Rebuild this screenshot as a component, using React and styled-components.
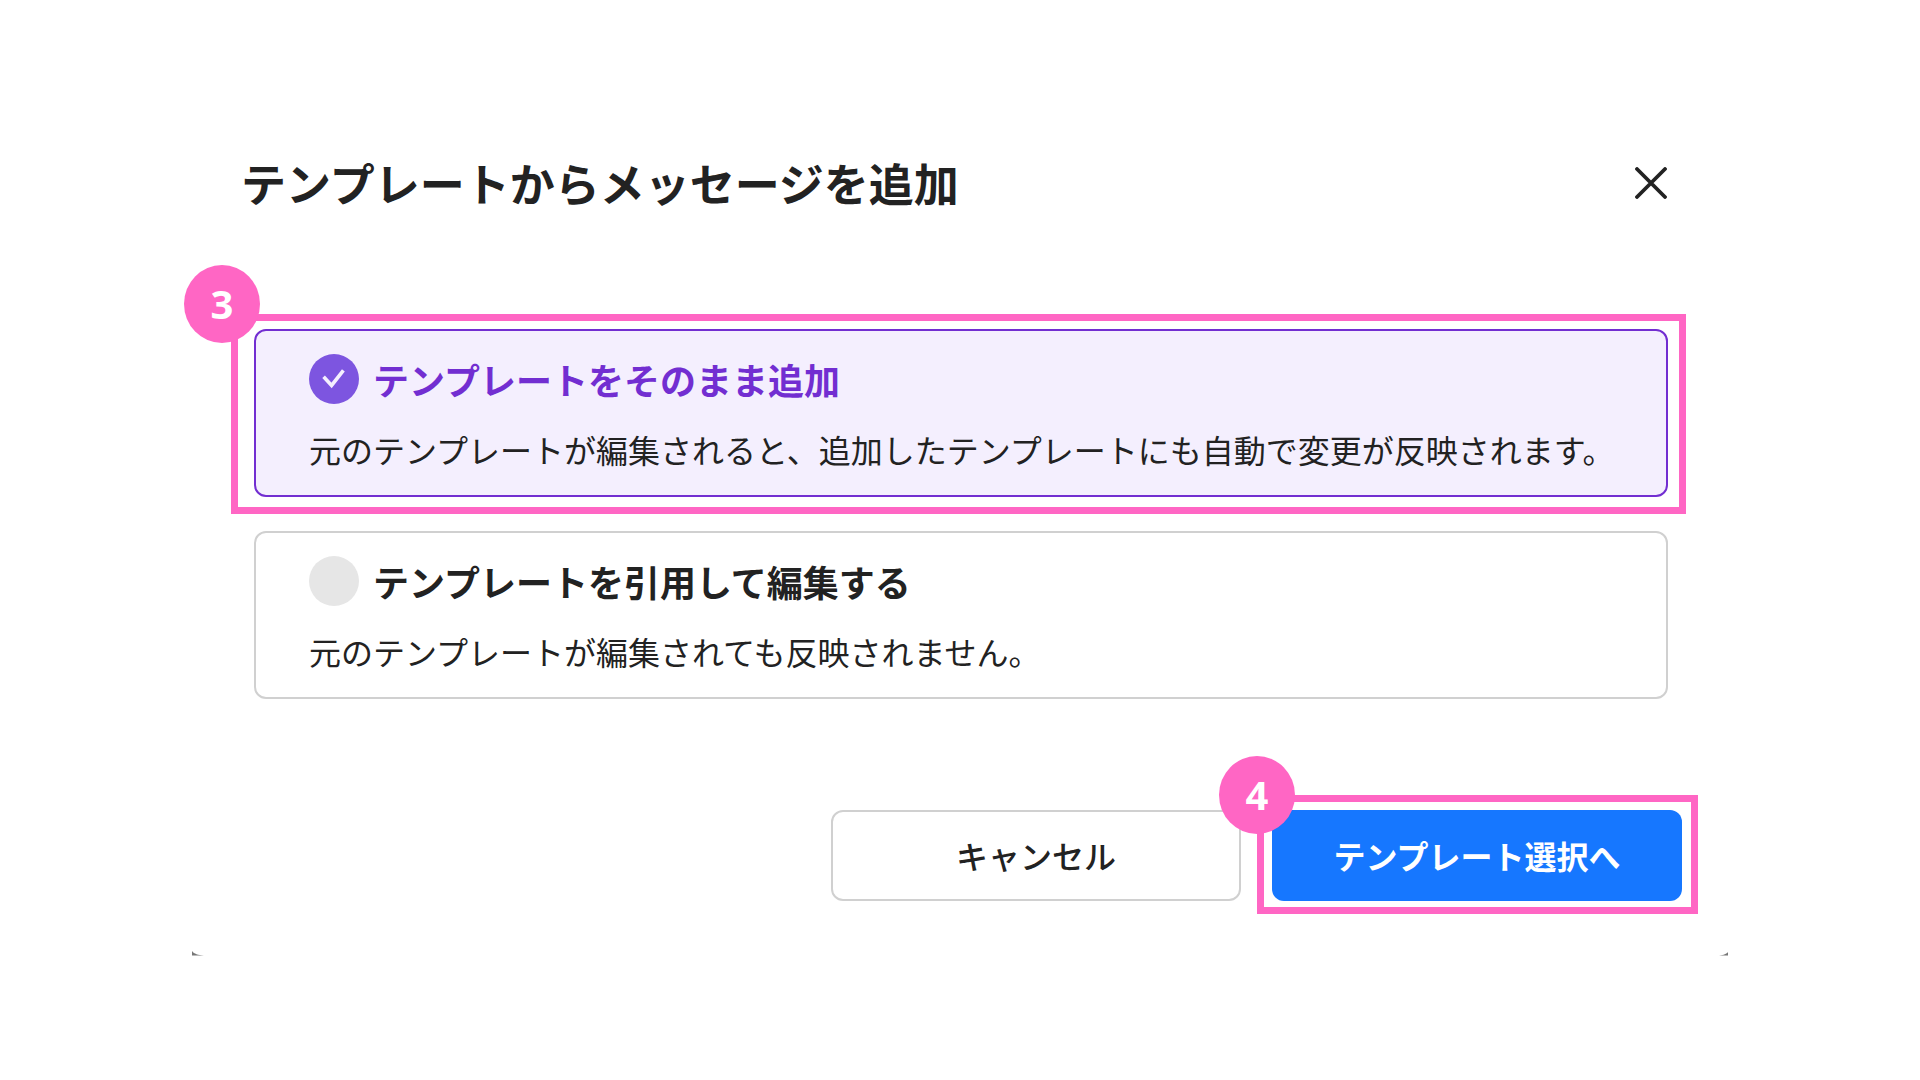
import { useState } from "react";
import styled, { createGlobalStyle } from "styled-components";

const options = [
  {
    id: "link",
    title: "テンプレートをそのまま追加",
    description:
      "元のテンプレートが編集されると、追加したテンプレートにも自動で変更が反映されます。",
    step: 3,
  },
  {
    id: "copy",
    title: "テンプレートを引用して編集する",
    description: "元のテンプレートが編集されても反映されません。",
  },
];

const App = () => {
  const [selected, setSelected] = useState("link");

  return (
    <>
      <GlobalStyle />
      <Page>
        <Dialog role="dialog" aria-labelledby="dialog-title">
          <Header>
            <Title id="dialog-title">テンプレートからメッセージを追加</Title>
            <CloseButton type="button" aria-label="閉じる">
              <svg width="32" height="32" viewBox="0 0 32 32" fill="none">
                <path
                  d="M2 2L30 30M30 2L2 30"
                  stroke="currentColor"
                  strokeWidth="3.8"
                  strokeLinecap="round"
                />
              </svg>
            </CloseButton>
          </Header>

          <OptionList>
            {options.map((option) => (
              <OptionCard key={option.id} $active={selected === option.id}>
                <OptionHead>
                  <RadioBox>
                    <Radio
                      type="radio"
                      name="addMode"
                      value={option.id}
                      checked={selected === option.id}
                      onChange={() => setSelected(option.id)}
                    />
                    {selected === option.id && (
                      <CheckMark viewBox="0 0 50 50" fill="none">
                        <path
                          d="M14.6 22.8L22.6 31.4L34.4 16.4"
                          stroke="#f4effe"
                          strokeWidth="3.6"
                        />
                      </CheckMark>
                    )}
                  </RadioBox>
                  <OptionTitle $active={selected === option.id}>
                    {option.title}
                  </OptionTitle>
                </OptionHead>
                <Description>{option.description}</Description>
                {option.step && (
                  <CardMarker>
                    <StepBadge $top={-56} $left={-54}>
                      {option.step}
                    </StepBadge>
                  </CardMarker>
                )}
              </OptionCard>
            ))}
          </OptionList>

          <Footer>
            <Button type="button">キャンセル</Button>
            <ButtonSlot>
              <Button type="button" $primary>
                テンプレート選択へ
              </Button>
              <ButtonMarker>
                <StepBadge $top={-46} $left={-45}>
                  4
                </StepBadge>
              </ButtonMarker>
            </ButtonSlot>
          </Footer>

          <Corners>
            <svg width="12" height="5" viewBox="0 0 12 5">
              <path d="M0 0C2 3 6 4 12 4.6H0Z" fill="#777" />
            </svg>
            <svg width="9" height="4" viewBox="0 0 9 4">
              <path d="M9 0C7.5 2 5 3 0 3.6H9Z" fill="#777" />
            </svg>
          </Corners>
        </Dialog>
      </Page>
    </>
  );
};

export default App;

const GlobalStyle = createGlobalStyle`
  * {
    box-sizing: border-box;
  }

  body {
    margin: 0;
    background: #fff;
    color: #222;
    font-family: "Noto Sans CJK JP", "Noto Sans", sans-serif;
  }

  button {
    font-family: inherit;
    cursor: pointer;
  }
`;

const Page = styled.main`
  min-height: 100vh;
  padding: 149px 10% 0;
`;

const Dialog = styled.section`
  display: flex;
  flex-direction: column;
`;

const Header = styled.header`
  display: flex;
  align-items: center;
  justify-content: space-between;
  padding: 0 50px 0 49px;
  margin-bottom: 112px;
`;

const Title = styled.h1`
  margin: 0;
  font-size: 45px;
  font-weight: 700;
  line-height: 68px;
`;

const CloseButton = styled.button`
  display: flex;
  align-items: center;
  justify-content: center;
  width: 54px;
  height: 54px;
  padding: 0;
  border: none;
  background: none;
  color: #222;
`;

const OptionList = styled.div`
  display: flex;
  flex-direction: column;
  gap: 34px;
  padding: 0 60px 0 62px;
  margin-bottom: 111px;
`;

const OptionCard = styled.label`
  position: relative;
  display: block;
  padding: 23px 40px 24px 53px;
  border: 2px solid ${(props) => (props.$active ? "#722ed1" : "#d0d0d0")};
  border-radius: 12px;
  background: ${(props) => (props.$active ? "#f4effe" : "#fff")};
  cursor: pointer;
`;

const OptionHead = styled.div`
  display: flex;
  align-items: center;
  gap: 14px;
  margin-bottom: 23px;
`;

const RadioBox = styled.span`
  display: grid;
  flex-shrink: 0;

  > * {
    grid-area: 1 / 1;
  }
`;

const Radio = styled.input`
  appearance: none;
  width: 50px;
  height: 50px;
  margin: 0;
  border-radius: 50%;
  background: #e6e6e6;
  cursor: pointer;

  &:checked {
    background: #7d55e0;
  }
`;

const CheckMark = styled.svg`
  width: 50px;
  height: 50px;
  pointer-events: none;
`;

const OptionTitle = styled.span`
  color: ${(props) => (props.$active ? "#722ed1" : "#222")};
  font-size: 36px;
  font-weight: 700;
  line-height: 50px;
`;

const Description = styled.p`
  margin: 0;
  font-size: 32px;
  line-height: 44px;
`;

const Footer = styled.footer`
  display: flex;
  justify-content: flex-end;
  gap: 31px;
  padding: 0 46px 0 62px;
`;

const ButtonSlot = styled.div`
  position: relative;
`;

const Button = styled.button`
  width: 410px;
  height: 91px;
  padding: 0 0 2px;
  border: ${(props) => (props.$primary ? "none" : "2px solid #d0d0d0")};
  border-radius: 12px;
  background: ${(props) => (props.$primary ? "#1677ff" : "#fff")};
  color: ${(props) => (props.$primary ? "#fff" : "#222")};
  font-size: 32px;
  font-weight: ${(props) => (props.$primary ? 700 : 500)};
`;

/* Step markers drawn over the controls */

const Marker = styled.div`
  position: absolute;
  border: 7px solid #ff66c4;
  pointer-events: none;
`;

const CardMarker = styled(Marker)`
  inset: -17px -20px -19px -25px;
`;

const ButtonMarker = styled(Marker)`
  inset: -15px -16px -13px -15px;
`;

const StepBadge = styled.span`
  position: absolute;
  top: ${(props) => props.$top}px;
  left: ${(props) => props.$left}px;
  display: flex;
  align-items: center;
  justify-content: center;
  width: 76px;
  height: 78px;
  padding-bottom: 2px;
  border-radius: 50%;
  background: #ff66c4;
  color: #fff;
  font-family: "Noto Sans", sans-serif;
  font-size: 40px;
  font-weight: 700;
`;

const Corners = styled.div`
  display: flex;
  align-items: flex-end;
  justify-content: space-between;
  margin-top: 50px;
`;
